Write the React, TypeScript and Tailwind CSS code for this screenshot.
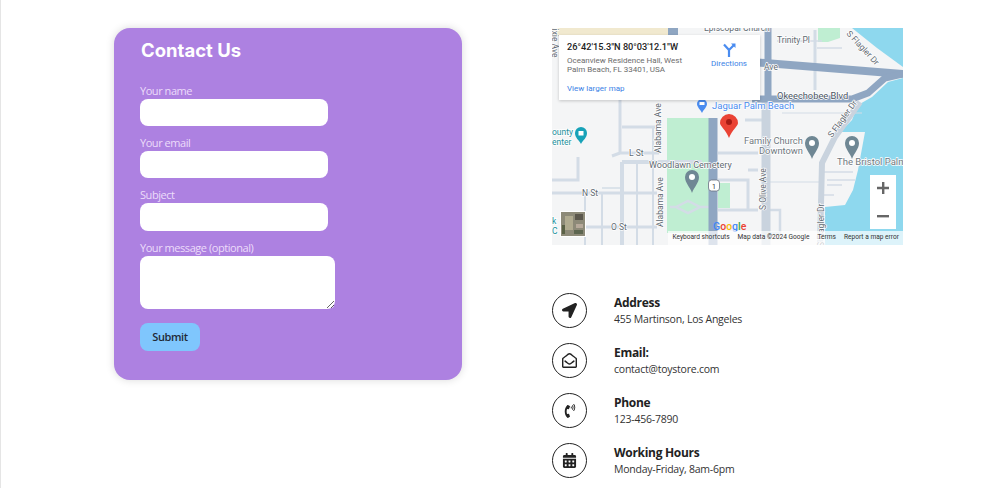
import type { ReactNode } from "react";
import { FaCalendarAlt, FaLocationArrow, FaPhoneVolume, FaRegEnvelopeOpen } from "react-icons/fa";

const Road = ({ d, w = 3, c = "#d3dce6" }: { d: string; w?: number; c?: string }) => (
  <path d={d} stroke={c} strokeWidth={w} fill="none" />
);

const MapLabel = ({
  x,
  y,
  children,
  size = 8.5,
  fill = "#5f6a72",
  rotate,
}: {
  x: number;
  y: number;
  children: string;
  size?: number;
  fill?: string;
  rotate?: number;
}) => (
  <text
    x={x}
    y={y}
    fontSize={size}
    fill={fill}
    fontFamily="Roboto, sans-serif"
    stroke="#ffffff"
    strokeWidth={1.4}
    paintOrder="stroke"
    transform={rotate ? `rotate(${rotate} ${x} ${y})` : undefined}
  >
    {children}
  </text>
);

const Pin = ({ x, y, fill }: { x: number; y: number; fill: string }) => (
  <g transform={`translate(${x} ${y})`}>
    <path d="M0 16C-2 10-7 6-7 0a7 7 0 0 1 14 0C7 6 2 10 0 16Z" fill={fill} />
    <circle cx="0" cy="0" r="3" fill="#fff" />
  </g>
);

const MapDrawing = () => (
  <svg viewBox="0 0 351 217" className="block h-full w-full">
    <rect width="351" height="217" fill="#f4f5f6" />
    <rect x="0" y="0" width="116" height="8" fill="#f1e9cf" />
    {/* water */}
    <path d="M300 0 325 20 351 39V0Z" fill="#8ed8ee" />
    <path d="M351 50 336 54 320 69 306 77 300 92 288 104H313L306 142 301 162 293 177 273 179V217H351Z" fill="#8ed8ee" />
    {/* parks */}
    <rect x="115" y="90" width="43" height="115" fill="#bfeed2" />
    <rect x="166" y="155" width="12" height="25" fill="#bfeed2" />
    <path d="M266 0H288V10L276 14H266Z" fill="#bfeed2" />
    {/* minor roads */}
    <Road d="M68 72V125H107M68 125 60 128" />
    <Road d="M70 99H103" />
    <Road d="M70 134V217M70 134H150" w={4} />
    <Road d="M26 129V152H0" />
    <Road d="M0 165H105" w={3} />
    <Road d="M85 134V217M101 100V217M50 165V217M33 165V217" w={2} />
    <Road d="M34 199H105" w={3} />
    <Road d="M50 160H68" w={1.5} />
    <Road d="M118 179H124M148 179H158M124 179 136 173 148 179 136 185Z" w={2.5} />
    <Road d="M166 182H206M166 125H206M166 152H196V182M196 142H206" w={3} />
    <Road d="M193 92H210" w={3} />
    <Road d="M215 182H228V205H215" w={2.5} />
    <Road d="M216 154H270" w={1} />
    <Road d="M230 85H310" w={1} />
    <Road d="M263 2V62" w={3} />
    <Road d="M225 13H270M265 20H290" w={1.5} />
    <Road d="M271 144H301M275 152H303M275 157H290M270 167H282" w={1.5} />
    {/* main roads */}
    <Road d="M214 70V217" w={9} c="#c9d3de" />
    <Road d="M161 90V217" w={9} c="#8fa6c2" />
    <Road d="M121 0V8" w={10} c="#8fa6c2" />
    <Road d="M216 0V70" w={7} c="#8fa6c2" />
    <Road d="M200 34 351 46" w={8} c="#8fa6c2" />
    <Road d="M200 71H300L316 65 333 50 351 46" w={7} c="#8fa6c2" />
    <Road d="M308 74 283 109 270 135 268 217" w={6} c="#c9d3de" />
    {/* labels */}
    <MapLabel x={152} y={3}>Episcopal Church</MapLabel>
    <MapLabel x={0} y={-5} rotate={90}>Dixie Ave</MapLabel>
    <MapLabel x={109} y={125} rotate={-90}>Alabama Ave</MapLabel>
    <MapLabel x={111} y={199} rotate={-90}>Alabama Ave</MapLabel>
    <MapLabel x={77} y={128}>L St</MapLabel>
    <MapLabel x={97} y={140} size={9}>Woodlawn Cemetery</MapLabel>
    <MapLabel x={30} y={168}>N St</MapLabel>
    <MapLabel x={59} y={202}>O St</MapLabel>
    <MapLabel x={225} y={15}>Trinity Pl</MapLabel>
    <MapLabel x={212} y={42}>Ave</MapLabel>
    <MapLabel x={225} y={71} size={9.3} fill="#4b5563">Okeechobee Blvd</MapLabel>
    <MapLabel x={294} y={6} rotate={47}>S Flagler Dr</MapLabel>
    <MapLabel x={280} y={110} rotate={-54}>S Flagler Dr</MapLabel>
    <MapLabel x={214} y={182} rotate={-90}>S Olive Ave</MapLabel>
    <MapLabel x={272} y={219} rotate={-90}>S Flagler Dr</MapLabel>
    <MapLabel x={192} y={116} size={9.3} fill="#70797f">Family Church</MapLabel>
    <MapLabel x={207} y={126} size={9.3} fill="#70797f">Downtown</MapLabel>
    <MapLabel x={285} y={137} size={9.5} fill="#70797f">The Bristol Palm</MapLabel>
    <MapLabel x={160} y={81} size={9.5} fill="#4a8cf0">Jaguar Palm Beach</MapLabel>
    <MapLabel x={0} y={107} fill="#1a8f9c">ounty</MapLabel>
    <MapLabel x={0} y={117} fill="#1a8f9c">enter</MapLabel>
    <MapLabel x={0} y={196} fill="#1a8f9c">k</MapLabel>
    <MapLabel x={0} y={206} fill="#1a8f9c">C</MapLabel>
    {/* place pins */}
    <path d="M29 116C27 112 23 110 23 105a6 6 0 0 1 12 0C35 110 31 112 29 116Z" fill="#17a2b8" />
    <rect x="26.5" y="103" width="5" height="4.5" fill="#fff" />
    <Pin x={260} y={115} fill="#6f8794" />
    <Pin x={300} y={115} fill="#6f8794" />
    <Pin x={140} y={149} fill="#6f8794" />
    <path d="M150 85C148 81 145 79 145 76a5 5 0 0 1 10 0C155 79 152 81 150 85Z" fill="#4a8cf0" />
    <rect x="147.5" y="74" width="5" height="3" fill="#fff" />
    {/* red pin */}
    <path d="M177 110C174 102 168 98 168 95a9 9 0 0 1 18 0C186 98 180 102 177 110Z" fill="#ea4335" />
    <circle cx="177" cy="94" r="3" fill="#a61b14" />
    {/* route shield */}
    <rect x="156.5" y="152" width="11" height="11" rx="3" fill="#fff" stroke="#6b7280" strokeWidth=".8" />
    <text x="160" y="160.5" fontSize="7" fill="#333" fontFamily="Roboto, sans-serif">1</text>
    {/* satellite thumb */}
    <rect x="8" y="183" width="26" height="26" fill="#fff" />
    <rect x="9" y="184" width="24" height="24" fill="#8d8a78" />
    <rect x="13" y="188" width="8" height="14" fill="#b0ab90" />
    <rect x="23" y="186" width="8" height="6" fill="#5b574c" />
    <rect x="10" y="197" width="3" height="9" fill="#5a6146" />
    <rect x="24" y="196" width="7" height="4" fill="#b6a99a" />
    <rect x="22" y="202" width="9" height="4" fill="#5d6650" />
    {/* google */}
    <text x="161" y="202" fontSize="10.5" fontFamily="Roboto, sans-serif" fontWeight="500">
      <tspan fill="#4285f4">G</tspan>
      <tspan fill="#ea4335">o</tspan>
      <tspan fill="#fbbc05">o</tspan>
      <tspan fill="#4285f4">g</tspan>
      <tspan fill="#34a853">l</tspan>
      <tspan fill="#ea4335">e</tspan>
    </text>
  </svg>
);

const MapEmbed = () => (
  <div className="relative h-[217px] w-[351px] overflow-hidden font-['Roboto',sans-serif]">
    <MapDrawing />
    <div className="absolute left-[7px] top-[7px] flex h-[65px] w-[201px] justify-between bg-white pl-2 pr-[13px] pt-[6px] shadow-[0_1px_3px_rgba(0,0,0,0.2)]">
      <div>
        <div className="text-[9.2px] font-medium leading-[12px] text-[#222]">26°42'15.3"N 80°03'12.1"W</div>
        <div className="mt-[3px] text-[8px] leading-[9px] text-[#6b6b6b]">
          Oceanview Residence Hall, West
          <br />
          Palm Beach, FL 33401, USA
        </div>
        <div className="mt-[10px] text-[8px] leading-[9px] text-[#3b82e6]">View larger map</div>
      </div>
      <div className="flex flex-col items-center pt-[2px] text-[8px] leading-[9px] text-[#3b82e6]">
        <svg width="14" height="14" viewBox="0 0 14 14" fill="none" stroke="#4a8cf0" strokeWidth="2.2">
          <path d="M2 1.5l5 5.500v7M12 2 7 7" />
          <path d="M9 .5h4.500V5Z" fill="#4a8cf0" stroke="none" />
        </svg>
        <span className="mt-[2px]">Directions</span>
      </div>
    </div>
    <div className="absolute bottom-[16px] right-[7px] flex h-[54px] w-[26px] flex-col items-center justify-between bg-white py-[6px]">
      <svg width="14" height="14" viewBox="0 0 14 14" fill="#666">
        <path d="M6 1h2.400v4.800H13v2.400H8.400V13H6V8.200H1V5.800h5Z" />
      </svg>
      <svg width="14" height="14" viewBox="0 0 14 14" fill="#666">
        <path d="M1 6h12v2.400H1Z" />
      </svg>
    </div>
    <div className="absolute bottom-0 right-0 flex h-[14px] items-center gap-2 bg-white/70 px-[4px] text-[6.6px] text-[#333]">
      <span>Keyboard shortcuts</span>
      <span>Map data ©2024 Google</span>
      <span>Terms</span>
      <span>Report a map error</span>
    </div>
  </div>
);

const Field = ({ label, tall }: { label: string; tall?: boolean }) => (
  <div className="flex flex-col">
    <label className="pb-[2px] text-[11px] leading-[13px] tracking-[-0.45px] text-[#ecdcfa]">{label}</label>
    <input className={`${tall ? "h-[28px]" : "h-[27px]"} w-[188px] rounded-[8px] bg-white`} />
  </div>
);

const ContactForm = () => (
  <form className="h-[352px] w-[348px] rounded-[16px] bg-[#ad81e1] pl-[26px] shadow-[0_0_8px_rgba(0,0,0,0.15)]">
    <h2 className="ml-[1px] pt-[9px] font-['Inter',sans-serif] text-[18.5px] font-bold leading-[26px] text-white">
      Contact Us
    </h2>
    <div className="mt-[21px] flex flex-col gap-[10px]">
      <Field label="Your name" />
      <Field label="Your email" />
      <Field label="Subject" tall />
      <div className="flex flex-col">
        <label className="pb-[2px] text-[11px] leading-[13px] tracking-[-0.45px] text-[#ecdcfa]">
          Your message (optional)
        </label>
        <textarea className="h-[53px] w-[195px] rounded-[8px] bg-white" />
      </div>
    </div>
    <button
      type="button"
      className="mt-[14px] h-[28px] w-[60px] rounded-[8px] bg-[#7fc6fd] text-[11px] font-semibold tracking-[-0.4px] text-[#1f2937]"
    >
      Submit
    </button>
  </form>
);

const InfoRow = ({ icon, title, text }: { icon: ReactNode; title: string; text: string }) => (
  <div className="flex items-center gap-[27px]">
    <div className="flex h-[35px] w-[35px] items-center justify-center rounded-full border border-[#222] text-[#222]">
      {icon}
    </div>
    <div className="pt-[2px]">
      <div className="text-[12px] font-bold leading-[15px] tracking-[-0.3px] text-[#222]">{title}</div>
      <div className="mt-[1px] text-[10.5px] leading-[17px] tracking-[-0.23px] text-[#333]">{text}</div>
    </div>
  </div>
);

const App = () => (
  <div className="relative h-[488px] w-[989px] overflow-hidden border-l border-[#e5e5e5] bg-white font-['Open_Sans',sans-serif]">
    <div className="flex pl-[113px] pt-[28px]">
      <ContactForm />
      <div className="ml-[90px]">
        <MapEmbed />
        <div className="mt-[48px] flex flex-col gap-[15px]">
          <InfoRow title="Address" text="455 Martinson, Los Angeles" icon={<FaLocationArrow size={15} />} />
          <InfoRow title="Email:" text="contact@toystore.com" icon={<FaRegEnvelopeOpen size={15} />} />
          <InfoRow title="Phone" text="123-456-7890" icon={<FaPhoneVolume size={14} />} />
          <InfoRow title="Working Hours" text="Monday-Friday, 8am-6pm" icon={<FaCalendarAlt size={15} />} />
        </div>
      </div>
    </div>
  </div>
);

export default App;
